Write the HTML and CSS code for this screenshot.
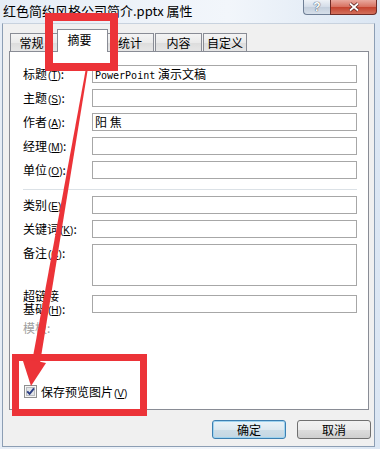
FILE: index.html
```html
<!DOCTYPE html>
<html lang="zh-CN">
<head>
    <meta charset="UTF-8">
    <title>红色简约风格公司简介.pptx 属性</title>
    <link rel="stylesheet" href="styles.css">
</head>
<body>
    <div class="window">
        <div class="titlebar">
            <span class="title">红色简约风格公司简介.pptx 属性</span>
            <div class="caption-btns">
                <span class="cap-help">?</span>
                <span class="cap-close">
                    <svg width="12" height="10" viewBox="0 0 12 10">
                        <path d="M2 1.5 L10 8.5 M10 1.5 L2 8.5" stroke="#5a2420" stroke-width="3.4" fill="none"/>
                        <path d="M2 1.5 L10 8.5 M10 1.5 L2 8.5" stroke="#fff" stroke-width="1.8" fill="none"/>
                    </svg>
                </span>
            </div>
        </div>

        <div class="client">
            <div class="tabs">
                <div class="tab tab-general">常规</div>
                <div class="tab active">摘要</div>
                <div class="tab tab-stats">统计</div>
                <div class="tab tab-content">内容</div>
                <div class="tab tab-custom">自定义</div>
            </div>

            <div class="panel">
                <div class="form">
                    <label>标题<span class="key">(<u>T</u>)</span>:</label>
                    <div class="field"><span class="mono">PowerPoint</span> 演示文稿</div>

                    <label>主题<span class="key">(<u>S</u>)</span>:</label>
                    <div class="field"></div>

                    <label>作者<span class="key">(<u>A</u>)</span>:</label>
                    <div class="field">阳 焦</div>

                    <label>经理<span class="key">(<u>M</u>)</span>:</label>
                    <div class="field"></div>

                    <label>单位<span class="key">(<u>O</u>)</span>:</label>
                    <div class="field"></div>

                    <div class="sep"></div>

                    <label>类别<span class="key">(<u>E</u>)</span>:</label>
                    <div class="field"></div>

                    <label>关键词<span class="key">(<u>K</u>)</span>:</label>
                    <div class="field"></div>

                    <label>备注<span class="key">(<u>C</u>)</span>:</label>
                    <div class="field memo"></div>

                    <label class="two-line">超链接<br>基础<span class="key">(<u>H</u>)</span>:</label>
                    <div class="field"></div>

                    <label class="muted">模板:</label>
                    <div></div>
                </div>

                <div class="check-row">
                    <svg class="checkbox" width="13" height="13" viewBox="0 0 13 13">
                        <rect x="0.5" y="0.5" width="12" height="12" fill="#f6f6f6" stroke="#8e8f8f"/>
                        <rect x="2.5" y="2.5" width="8" height="8" fill="#e2e4e7" stroke="#b9bcc0"/>
                        <path d="M3.2 6.3 L5.6 8.9 L10 3.4" stroke="#2c3f84" stroke-width="1.9" fill="none"/>
                    </svg>
                    <span>保存预览图片<span class="key">(<u>V</u>)</span></span>
                </div>
            </div>

            <div class="footer">
                <button class="btn default">确定</button>
                <button class="btn">取消</button>
            </div>
        </div>

        <!-- red annotation marks drawn over the dialog -->
        <svg class="marks" width="380" height="449" viewBox="0 0 380 449">
            <rect x="49" y="17" width="65" height="50" fill="none" stroke="#ec3338" stroke-width="8"/>
            <rect x="15.5" y="357.5" width="128" height="55" fill="none" stroke="#ec3338" stroke-width="7"/>
            <polygon points="86,68 88,68 40,363 32,362" fill="#ec3338"/>
            <polygon points="22,358 46,363 31,386" fill="#ec3338"/>
        </svg>
    </div>
</body>
</html>
```

FILE: styles.css
```css
body {
    margin: 0;
    font-family: "Noto Sans CJK SC", "Liberation Sans", sans-serif;
    font-size: 12px;
    color: #000;
}
.window {
    position: relative;
    width: 380px;
    height: 449px;
    box-sizing: border-box;
    padding: 0 0 2px 2px;
    background: linear-gradient(to right, #e6edf6 0%, #f2f6fb 60%, #dbe6f3 100%);
    display: flex;
    flex-direction: column;
    overflow: hidden;
}
.titlebar {
    height: 23px;
    margin-left: -2px;
    display: flex;
    align-items: flex-start;
}
.title {
    padding: 1px 0 0 3px;
    font-size: 13px;
    line-height: 20px;
}
.caption-btns {
    margin-left: auto;
    margin-right: 3px;
    display: flex;
}
.cap-help {
    width: 27px;
    height: 15px;
    box-sizing: border-box;
    border: 1px solid #6f7f96;
    border-top: 0;
    border-right: 0;
    border-bottom-left-radius: 4px;
    background: linear-gradient(#eef2f7, #d3dce8 50%, #c3cedc 51%, #d6dfea);
    color: #fff;
    font-family: "Liberation Sans", sans-serif;
    font-weight: bold;
    font-size: 12px;
    line-height: 14px;
    text-align: center;
    text-shadow: 0 0 1px #3b4a60, 0 0 1px #3b4a60;
}
.cap-close {
    width: 47px;
    height: 15px;
    box-sizing: border-box;
    border: 1px solid #6e2b26;
    border-top: 0;
    border-bottom-right-radius: 4px;
    background: linear-gradient(#e9a99f, #d7705f 50%, #c4432f 51%, #d3705c);
    display: flex;
    align-items: center;
    justify-content: center;
}
.client {
    flex: 1;
    width: 373px;
    box-sizing: border-box;
    border: 1px solid #8c9eb4;
    border-top-color: #c8d2de;
    background: #f0f0f0;
    padding-top: 5px;
    display: flex;
    flex-direction: column;
}
.tabs {
    display: flex;
    align-items: flex-end;
    height: 22px;
    margin-left: 7px;
}
.tab {
    height: 18px;
    box-sizing: border-box;
    border: 1px solid #898c95;
    border-bottom: 0;
    background: linear-gradient(#f4f4f4, #eaeaea 50%, #dcdcdc 51%, #e6e6e6);
    text-align: center;
    line-height: 17px;
}
.tab-general { width: 49px; padding-right: 6px; }
.tab.active {
    position: relative;
    z-index: 1;
    width: 51px;
    height: 23px;
    margin: 0 -2px -1px;
    background: #fff;
    line-height: 19px;
    padding-right: 6px;
}
.tab-stats { width: 48px; }
.tab-content { width: 47px; margin-left: 1px; }
.tab-custom { width: 44px; margin-left: 1px; }
.panel {
    width: 360px;
    height: 359px;
    margin-left: 6px;
    box-sizing: border-box;
    border: 1px solid #898c95;
    background: #fff;
    padding: 13px 10px 11px 13px;
    display: flex;
    flex-direction: column;
}
.form {
    display: grid;
    grid-template-columns: 69px 265px;
    grid-template-rows: 18px 18px 18px 18px 18px 5px 18px 18px 45px 18px 18px;
    row-gap: 6px;
}
.form label {
    height: 18px;
    line-height: 18px;
    white-space: nowrap;
}
.key {
    font-family: "Liberation Sans", sans-serif;
    font-size: 10px;
    line-height: 10px;
    margin-left: 1px;
}
.field {
    height: 18px;
    box-sizing: border-box;
    border: 1px solid #a7a7a7;
    padding-left: 2px;
    line-height: 16px;
    font-size: 12px;
}
.mono {
    font-family: "DejaVu Sans Mono", "Liberation Mono", monospace;
    font-size: 10px;
    line-height: 10px;
}
.field.memo {
    height: 42px;
}
.sep {
    grid-column: 1 / -1;
    align-self: end;
    height: 1px;
    background: #dbe1e6;
}
.form label.two-line {
    height: 26px;
    line-height: 13px;
    margin-top: -6px;
}
.form label.muted {
    color: #a0a0a0;
}
.check-row {
    margin-top: auto;
    height: 13px;
    display: flex;
    align-items: center;
    gap: 4px;
    margin-left: 1px;
    line-height: 13px;
}
.footer {
    margin-top: 10px;
    padding-right: 3px;
    display: flex;
    justify-content: flex-end;
    gap: 11px;
}
.btn {
    width: 74px;
    height: 19px;
    padding: 0;
    border: 1px solid #707070;
    border-radius: 3px;
    background: linear-gradient(#f2f2f2, #ebebeb 50%, #dddddd 51%, #cfcfcf);
    font-family: "Noto Sans CJK SC", sans-serif;
    font-size: 12px;
    line-height: 16px;
    color: #000;
}
.btn.default {
    border-color: #3c7fb1;
    background: linear-gradient(#eaf3f8, #dde9f0 50%, #cddde7 51%, #c4d6e2);
    box-shadow: inset 0 0 0 1px #9fd3ef;
}
.marks {
    position: absolute;
    left: 0;
    top: 0;
    pointer-events: none;
}
```
